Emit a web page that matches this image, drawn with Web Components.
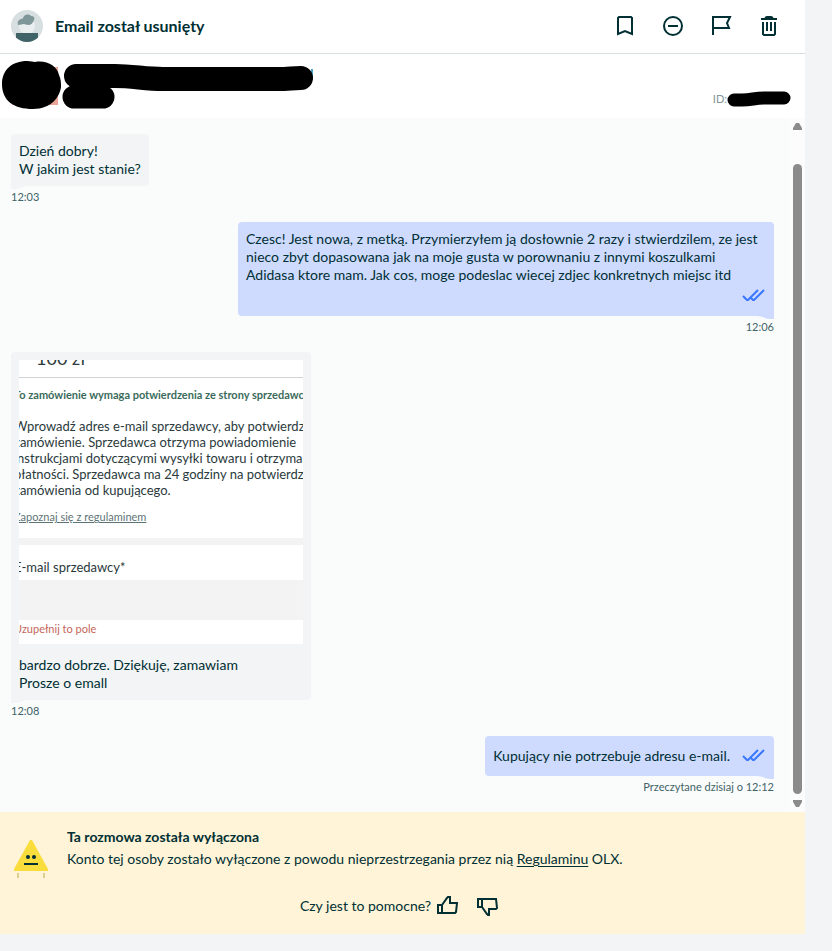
<!DOCTYPE html>
<html lang="pl">
<head>
<meta charset="utf-8">
<meta name="viewport" content="width=device-width, initial-scale=1">
<title>Wiadomości</title>
<style>
  body {
    margin: 0;
    background: #f2f4f5;
    color: #002f34;
    font: 14px/18px Lato, "Liberation Sans", sans-serif;
  }
</style>
</head>
<body>
<chat-app>
  <chat-header name="Email został usunięty"></chat-header>
  <ad-bar></ad-bar>
  <chat-history>
    <chat-message time="12:03">Dzień dobry!<br>W jakim jest stanie?</chat-message>
    <chat-message time="12:06" own>Czesc! Jest nowa, z metką. Przymierzyłem ją dosłownie 2 razy i stwierdzilem, ze jest<br>nieco zbyt dopasowana jak na moje gusta w porownaniu z innymi koszulkami<br>Adidasa ktore mam. Jak cos, moge podeslac wiecej zdjec konkretnych miejsc itd</chat-message>
    <chat-message time="12:08"><order-attachment slot="media"></order-attachment>bardzo dobrze. Dziękuję, zamawiam<br>Prosze o emall</chat-message>
    <chat-message time="Przeczytane dzisiaj o 12:12" own>Kupujący nie potrzebuje adresu e-mail.</chat-message>
  </chat-history>
  <chat-notice>
    <span slot="title">Ta rozmowa została wyłączona</span>
    Konto tej osoby zostało wyłączone z powodu nieprzestrzegania przez nią <a href="#regulamin">Regulaminu</a> OLX.
  </chat-notice>
</chat-app>

<script>
class ChatApp extends HTMLElement {
  constructor() {
    super();
    this.attachShadow({ mode: 'open' });
    this.shadowRoot.innerHTML = `
      <style>
        :host {
          display: flex;
          box-sizing: border-box;
          min-height: 100vh;
          padding: 0 27px 17px 0;
        }
        main {
          flex: 1;
          min-width: 0;
          display: flex;
          flex-direction: column;
          background: #fff;
        }
      </style>
      <main><slot></slot></main>
    `;
  }
}

class ChatHeader extends HTMLElement {
  constructor() {
    super();
    this.attachShadow({ mode: 'open' });
  }

  connectedCallback() {
    this.shadowRoot.innerHTML = `
      <style>
        :host { display: block; border-bottom: 1px solid #d8dfe0; }
        header {
          display: flex;
          align-items: center;
          gap: 12px;
          height: 51px;
          padding: 0 24px 2px 11px;
        }
        h1 { flex: 1; margin: 0; font-size: 16px; line-height: 20px; font-weight: 700; }
        nav { display: flex; gap: 24px; }
        button { display: flex; padding: 0; border: 0; background: none; color: inherit; cursor: pointer; }
        svg { display: block; }
      </style>
      <header>
        <svg width="32" height="32" viewBox="0 0 32 32">
          <clipPath id="round"><circle cx="16" cy="16" r="16"/></clipPath>
          <g clip-path="url(#round)">
            <rect width="32" height="32" fill="#d8dfe0"/>
            <circle cx="16" cy="16" r="8" fill="#ebeeef"/>
            <path d="M5 23h22v9H5z" fill="#406367"/>
            <path d="M7 15c-1-3 0-5 3-6 2 0 2-1 3-3 2-2 6-2 7 0 3 0 4 2 3 4-1 3-3 5-6 5-2 0-3-1-4-1-2 0-3 1-6 1z" fill="#7f9799"/>
          </g>
        </svg>
        <h1>${this.getAttribute('name')}</h1>
        <nav>
          <button type="button" aria-label="Zapisz"><svg width="24" height="24" viewBox="0 0 24 24" fill="none" stroke="currentColor" stroke-width="2"><path d="M5 20V4l1-1h12l1 1v16L12 17z"/></svg></button>
          <button type="button" aria-label="Zablokuj"><svg width="24" height="24" viewBox="0 0 24 24" fill="none" stroke="currentColor" stroke-width="2"><circle cx="12" cy="12" r="9"/><path d="M7 12h10"/></svg></button>
          <button type="button" aria-label="Zgłoś"><svg width="24" height="24" viewBox="0 0 24 24" fill="none" stroke="currentColor" stroke-width="2"><path d="M4 21V3h17l-3 6 2 5H4"/></svg></button>
          <button type="button" aria-label="Usuń"><svg width="24" height="24" viewBox="0 0 24 24" fill="none" stroke="currentColor" stroke-width="2"><path d="M4 5h16M6 8v12l1 1h10l1-1V8M10 8v9M14 8v9"/><path d="M8 4l2-1h4l2 1"/></svg></button>
        </nav>
      </header>
    `;
  }
}

class AdBar extends HTMLElement {
  constructor() {
    super();
    this.attachShadow({ mode: 'open' });
    this.shadowRoot.innerHTML = `
      <style>
        :host { display: flex; justify-content: space-between; height: 64px; }
        .id {
          display: flex;
          align-items: center;
          align-self: flex-end;
          padding: 0 14px 11px 0;
          color: #7f9799;
          font-size: 11px;
          line-height: 16px;
        }
      </style>
      <svg width="320" height="64" viewBox="0 0 320 64">
        <path d="M12 13h46v38H12z" fill="#e8a598"/>
        <path d="M311 15h2v11h-2z" fill="#4aa3c7"/>
        <path d="M2 30C2 16 12 7 27 7c4 0 6 1 8 1 12-2 22 4 24 13 2 4 2 8 2 12-1 9-9 22-28 22C14 55 2 47 2 30z"/>
        <path d="M76 22h39c18 0 30 3 48 3h115c10 0 15-1 23-1" fill="none" stroke="#000" stroke-width="24" stroke-linecap="round"/>
        <path d="M74 43h29" fill="none" stroke="#000" stroke-width="23" stroke-linecap="round"/>
      </svg>
      <div class="id">ID:
        <svg width="64" height="16" viewBox="0 0 64 16"><path d="M7 9h8c10 0 12-2 22-2h20" fill="none" stroke="#000" stroke-width="13" stroke-linecap="round"/></svg>
      </div>
    `;
  }
}

class ChatHistory extends HTMLElement {
  constructor() {
    super();
    this.attachShadow({ mode: 'open' });
    this.shadowRoot.innerHTML = `
      <style>
        :host { display: flex; flex: 1; background: #fafcfc; }
        .list {
          flex: 1;
          min-width: 0;
          display: flex;
          flex-direction: column;
          gap: 16px;
          padding: 16px 16px 16px 11px;
        }
        .scroll {
          width: 15px;
          display: flex;
          flex-direction: column;
          align-items: center;
          padding: 4px 0;
          background: #fcfcfc;
        }
        .thumb { flex: 1; width: 9px; margin: 34px 0 6px; border-radius: 5px; background: #8b8b8b; }
        svg { display: block; fill: #8b8b8b; }
      </style>
      <div class="list"><slot></slot></div>
      <div class="scroll">
        <svg width="9" height="8" viewBox="0 0 9 8"><path d="M0 8V6l3-5h3l3 5v2z"/></svg>
        <div class="thumb"></div>
        <svg width="9" height="8" viewBox="0 0 9 8"><path d="M0 0v2l3 5h3l3-5V0z"/></svg>
      </div>
    `;
  }
}

class ChatMessage extends HTMLElement {
  constructor() {
    super();
    this.attachShadow({ mode: 'open' });
  }

  connectedCallback() {
    const own = this.hasAttribute('own');
    const checks = `<svg class="checks" width="24" height="24" viewBox="0 0 24 24" role="img" aria-label="Przeczytane" fill="none" stroke="#3a77ff" stroke-width="2"><path d="M1 12l4 4h1L16 6M9 14l2 2h1L22 6"/></svg>`;
    this.shadowRoot.innerHTML = `
      <style>
        :host { display: flex; flex-direction: column; align-items: flex-start; --fill: #f2f4f5; }
        :host([own]) { align-items: flex-end; --fill: #cedbff; }
        .bubble {
          position: relative;
          display: flex;
          flex-wrap: wrap;
          align-items: center;
          justify-content: flex-end;
          column-gap: 12px;
          max-width: 536px;
          box-sizing: border-box;
          padding: 8px;
          border-radius: 4px;
          background: var(--fill);
        }
        :host(:not([own])) .bubble { flex-direction: column; align-items: flex-start; }
        .text { flex-grow: 1; margin: 0; }
        .tail { position: absolute; top: 100%; left: 0; margin-top: -4px; fill: var(--fill); }
        :host([own]) .tail { left: auto; right: 0; transform: scaleX(-1); }
        time { padding-top: 2px; font-size: 11px; color: #406367; }
      </style>
      <div class="bubble">
        <slot name="media"></slot>
        <p class="text"><slot></slot></p>
        ${own ? checks : ''}
        <svg class="tail" width="20" height="7" viewBox="0 0 20 7"><path d="M0 0h20v4h-3c-6 0-8 3-13 3H0z"/></svg>
      </div>
      <time>${this.getAttribute('time')}</time>
    `;
  }
}

// Photo of the order form, cropped to a square
class OrderAttachment extends HTMLElement {
  constructor() {
    super();
    this.attachShadow({ mode: 'open' });
    this.shadowRoot.innerHTML = `
      <style>
        :host {
          display: block;
          width: 284px;
          height: 284px;
          margin-bottom: 12px;
          overflow: hidden;
          background: #fff;
          color: #2b3a3c;
          font-size: 13px;
          line-height: 16px;
          white-space: nowrap;
        }
        .price { height: 17px; display: flex; align-items: flex-end; padding-left: 17px; border-bottom: 1px solid #d0d3d3; font-size: 18px; }
        .price span { height: 28px; line-height: 18px; }
        .body { height: 160px; }
        strong, p, a, label, .error { display: block; margin: 0 0 0 -5px; }
        strong { padding-top: 9px; font-size: 11px; color: #3b6b5c; }
        p { padding-top: 15px; }
        a { padding-top: 11px; font-size: 11px; color: #5d7376; }
        .field { border-top: 7px solid #f3f3f3; }
        label { padding: 14px 0 5px; }
        input { display: block; box-sizing: border-box; width: 100%; height: 40px; border: 0; background: #f3f3f3; }
        .error { padding-top: 1px; font-size: 11px; color: #c4665a; }
      </style>
      <div class="price"><span>100 zł</span></div>
      <div class="body">
        <strong>To zamówienie wymaga potwierdzenia ze strony sprzedawcy</strong>
        <p>Wprowadź adres e-mail sprzedawcy, aby potwierdzić<br>zamówienie. Sprzedawca otrzyma powiadomienie<br>instrukcjami dotyczącymi wysyłki towaru i otrzymania<br>płatności. Sprzedawca ma 24 godziny na potwierdz.<br>zamówienia od kupującego.</p>
        <a href="#regulamin">Zapoznaj się z regulaminem</a>
      </div>
      <div class="field">
        <label for="email">E-mail sprzedawcy*</label>
        <input id="email" type="email">
        <div class="error">Uzupełnij to pole</div>
      </div>
    `;
  }
}

class ChatNotice extends HTMLElement {
  constructor() {
    super();
    this.attachShadow({ mode: 'open' });
    this.shadowRoot.innerHTML = `
      <style>
        :host { display: block; padding: 14px 13px 16px; background: #fff4d7; }
        .info { display: flex; gap: 18px; line-height: 22px; }
        .icon { flex: none; margin-top: 14px; }
        .title { font-weight: 700; }
        ::slotted(a) { color: inherit; text-underline-offset: 2px; }
        .vote { display: flex; justify-content: center; align-items: center; gap: 4px; margin-top: 16px; padding-right: 6px; }
        button { display: flex; padding: 0; border: 0; background: none; color: inherit; cursor: pointer; }
        button + button { margin-left: 12px; }
      </style>
      <div class="info">
        <svg class="icon" width="36" height="38" viewBox="0 0 36 38">
          <path d="M17 0h2l16 29v2H1v-2z" fill="#f9dd3c"/>
          <circle cx="15" cy="17" r="2" fill="#002f34"/>
          <circle cx="21" cy="17" r="2" fill="#002f34"/>
          <path d="M11 23h14v2H11z" fill="#002f34"/>
          <path d="M4 33h2v5H4zM30 33h2v5h-2z" fill="#ddd08e"/>
        </svg>
        <div>
          <div class="title"><slot name="title"></slot></div>
          <div><slot></slot></div>
        </div>
      </div>
      <div class="vote">
        <span>Czy jest to pomocne?</span>
        <button type="button" aria-label="Tak"><svg width="24" height="24" viewBox="0 0 24 24" fill="none" stroke="currentColor" stroke-width="2"><path d="M3 11h4v8H3zM7 11l5-7 1-1h2v6h7l-1 9-1 1H7"/></svg></button>
        <button type="button" aria-label="Nie"><svg width="24" height="24" viewBox="0 0 24 24" fill="none" stroke="currentColor" stroke-width="2"><path d="M3 5h4v8H3zM7 13l5 7 1 1h1v-6h7l1-1-1-9H7"/></svg></button>
      </div>
    `;
  }
}

customElements.define('chat-app', ChatApp);
customElements.define('chat-header', ChatHeader);
customElements.define('ad-bar', AdBar);
customElements.define('chat-history', ChatHistory);
customElements.define('order-attachment', OrderAttachment);
customElements.define('chat-message', ChatMessage);
customElements.define('chat-notice', ChatNotice);
</script>
</body>
</html>
